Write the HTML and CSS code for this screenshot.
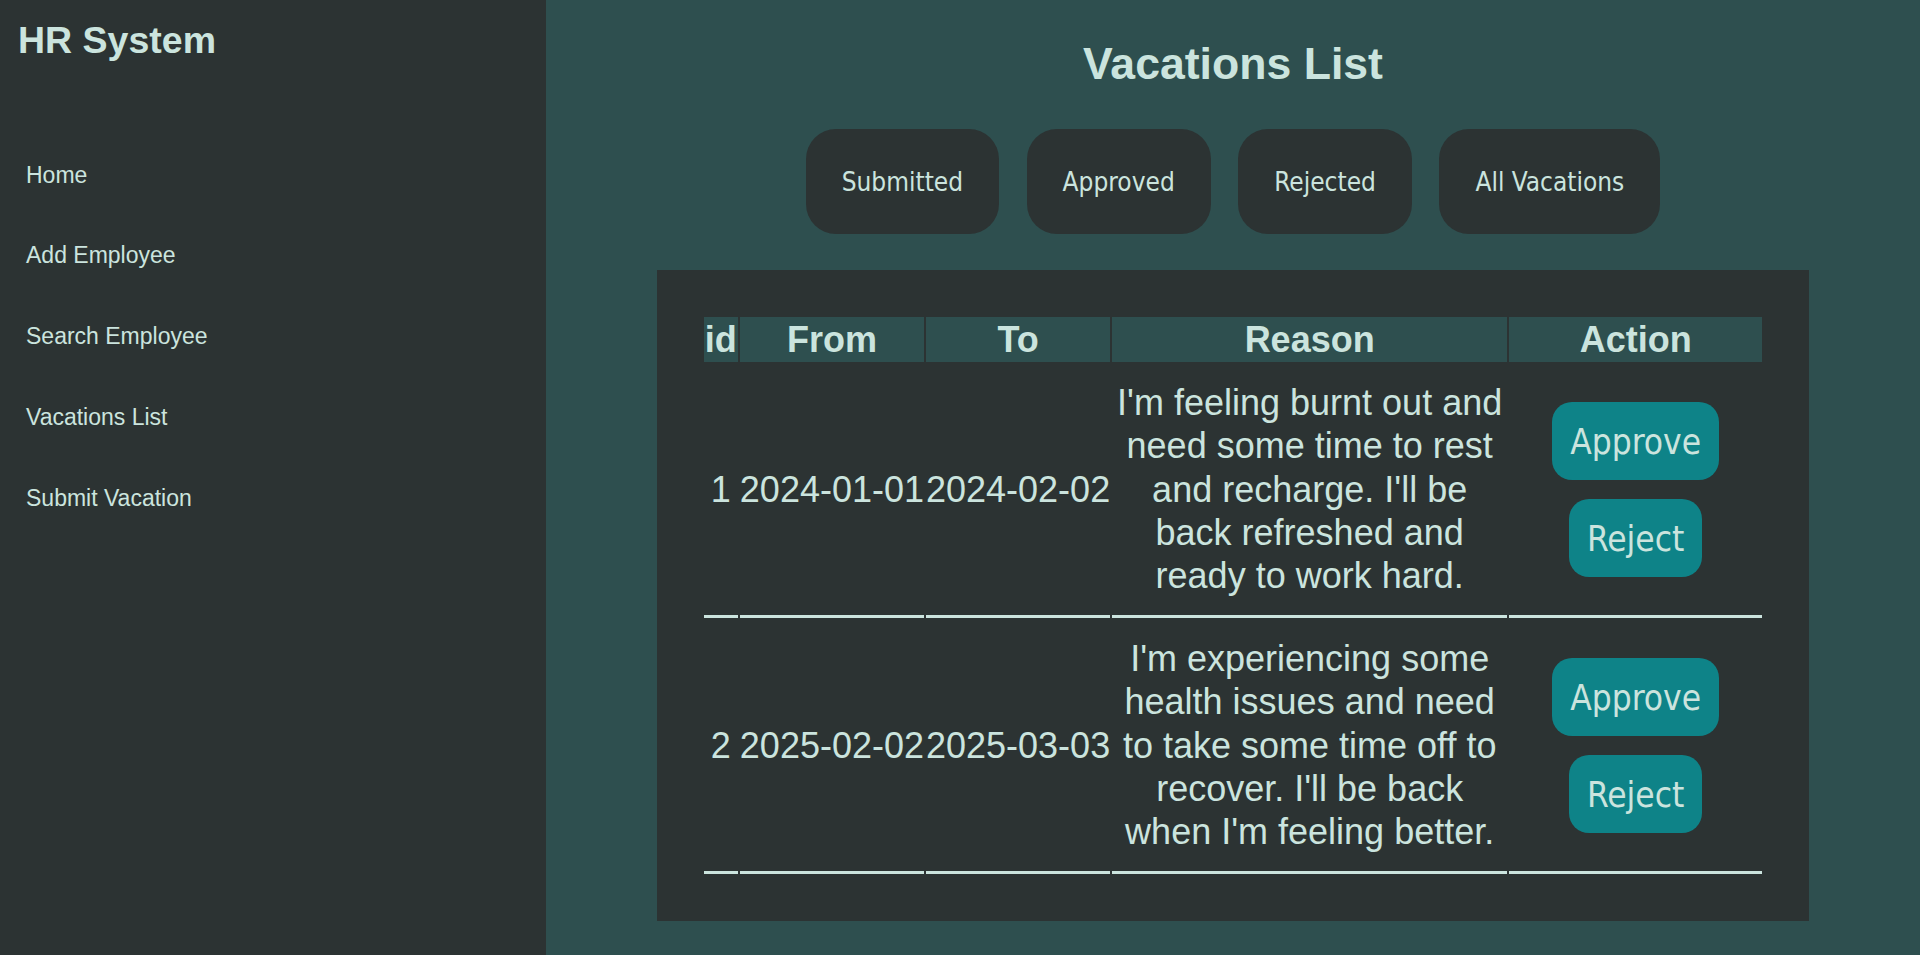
FILE: index.html
```html
<!DOCTYPE html>
<html lang="en">
<head>
<meta charset="utf-8">
<title>HR System - Vacations List</title>
<link rel="stylesheet" href="styles.css">
</head>
<body>
<div class="app">
  <aside class="sidebar">
    <h2 class="brand">HR System</h2>
    <nav class="nav">
      <a class="nav-link" href="#">Home</a>
      <a class="nav-link" href="#">Add Employee</a>
      <a class="nav-link" href="#">Search Employee</a>
      <a class="nav-link" href="#">Vacations List</a>
      <a class="nav-link" href="#">Submit Vacation</a>
    </nav>
  </aside>
  <main class="main">
    <h1 class="page-title">Vacations List</h1>
    <div class="filters">
      <button class="filter-btn">Submitted</button>
      <button class="filter-btn">Approved</button>
      <button class="filter-btn">Rejected</button>
      <button class="filter-btn">All Vacations</button>
    </div>
    <section class="table-card">
      <table class="vac-table">
        <thead>
          <tr>
            <th class="col-id">id</th>
            <th class="col-date">From</th>
            <th class="col-date">To</th>
            <th class="col-reason">Reason</th>
            <th class="col-action">Action</th>
          </tr>
        </thead>
        <tbody>
          <tr>
            <td class="nowrap">1</td>
            <td class="nowrap">2024-01-01</td>
            <td class="nowrap">2024-02-02</td>
            <td>I'm feeling burnt out and need some time to rest and recharge. I'll be back refreshed and ready to work hard.</td>
            <td class="action-cell">
              <div class="actions">
                <button class="act-btn">Approve</button>
                <button class="act-btn">Reject</button>
              </div>
            </td>
          </tr>
          <tr>
            <td class="nowrap">2</td>
            <td class="nowrap">2025-02-02</td>
            <td class="nowrap">2025-03-03</td>
            <td>I'm experiencing some health issues and need to take some time off to recover. I'll be back when I'm feeling better.</td>
            <td class="action-cell">
              <div class="actions">
                <button class="act-btn">Approve</button>
                <button class="act-btn">Reject</button>
              </div>
            </td>
          </tr>
        </tbody>
      </table>
    </section>
  </main>
</div>
</body>
</html>
```

FILE: styles.css
```css
* {
  box-sizing: border-box;
}

html, body {
  margin: 0;
  padding: 0;
}

body {
  font-family: "Liberation Sans", Arial, sans-serif;
  color: #cbe4de;
  background: #2e4f4f;
}

.app {
  display: flex;
  min-height: 955px;
}

.sidebar {
  width: 546px;
  flex: 0 0 546px;
  background: #2c3333;
  padding: 0 17px 0 18px;
}

.brand {
  margin: 19px 0 0;
  font-size: 37.5px;
  line-height: 42.5px;
  font-weight: bold;
  color: #cbe4de;
}

.nav {
  display: flex;
  flex-direction: column;
  margin-top: 73px;
}

.nav-link {
  display: block;
  padding: 27px 8px;
  font-size: 23px;
  line-height: 26.9px;
  color: #cbe4de;
  text-decoration: none;
}

.main {
  flex: 1;
  display: flex;
  flex-direction: column;
  align-items: center;
  background: #2e4f4f;
}

.page-title {
  margin: 38px 0 0;
  font-size: 44.6px;
  line-height: 51px;
  font-weight: bold;
  color: #cbe4de;
}

.filters {
  display: flex;
  gap: 27.5px;
  margin-top: 40px;
}

.filter-btn {
  font-family: "DejaVu Sans Condensed", "DejaVu Sans", sans-serif;
  font-stretch: condensed;
  font-size: 26px;
  line-height: 33px;
  padding: 37px 36px 35px;
  border: none;
  border-radius: 30px;
  background: #2c3333;
  color: #cbe4de;
  cursor: pointer;
}

.table-card {
  margin-top: 36px;
  padding: 45px;
  background: #2c3333;
}

.vac-table {
  border-collapse: separate;
  border-spacing: 2px;
  font-size: 36px;
  line-height: 1.2;
  text-align: center;
  color: #cbe4de;
}

.vac-table th {
  background: #2e4f4f;
  font-weight: bold;
  padding: 1px 0 0;
  height: 44.7px;
}

.col-id { width: 34px; }
.col-date { width: 184px; }
.col-reason { width: 395px; }
.col-action { width: 253px; }

.vac-table td {
  padding: 1px 0;
  vertical-align: middle;
  border-bottom: 3px solid #cbe4de;
}

.vac-table td.nowrap {
  white-space: nowrap;
}

.actions {
  display: flex;
  flex-direction: column;
  align-items: center;
  gap: 19px;
  padding: 37px 0;
}

.act-btn {
  font-family: "DejaVu Sans Condensed", "DejaVu Sans", sans-serif;
  font-stretch: condensed;
  font-size: 35px;
  line-height: 42px;
  padding: 19px 18px 17px;
  border: none;
  border-radius: 20px;
  background: #0e8388;
  color: #cbe4de;
  cursor: pointer;
}
```
